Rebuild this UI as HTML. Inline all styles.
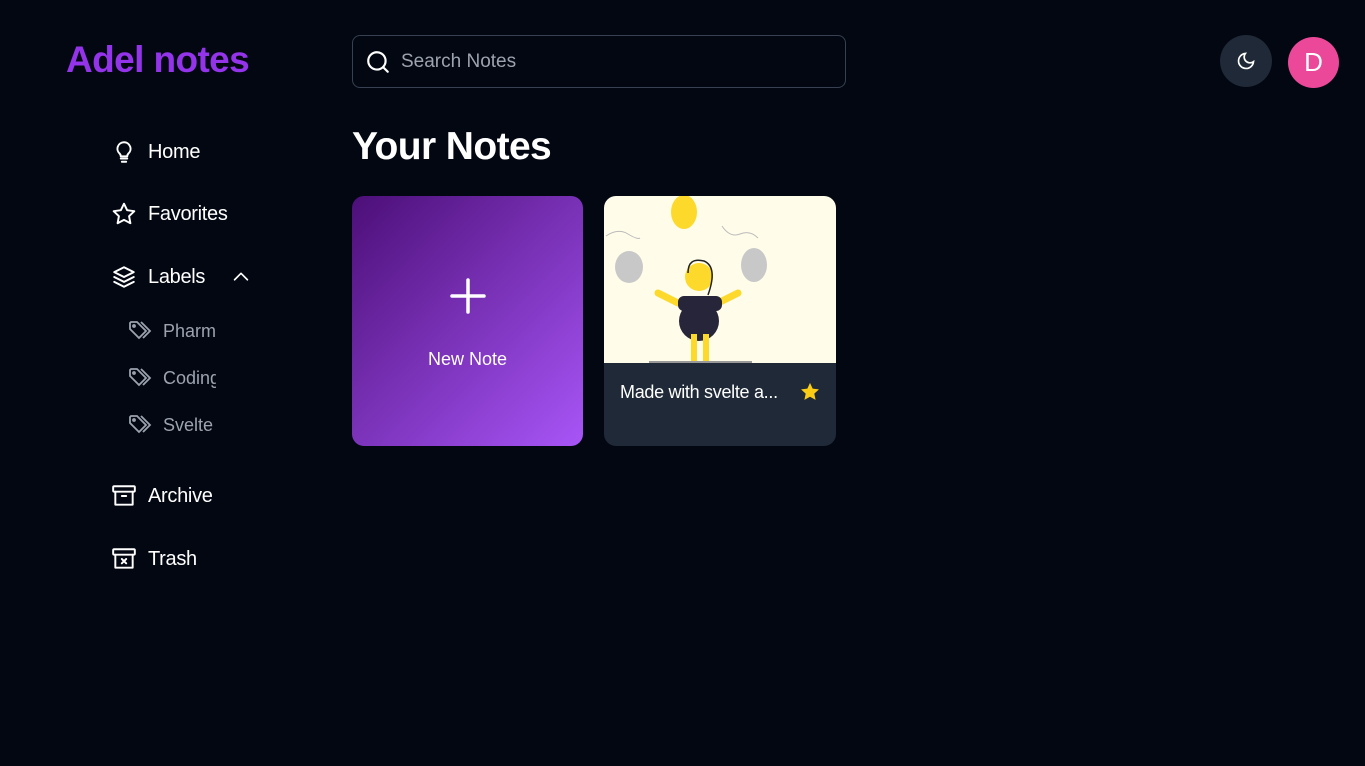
<!DOCTYPE html>
<html><head><style>
*{margin:0;padding:0;box-sizing:border-box}
body{width:1365px;height:766px;background:#030712;font-family:"Liberation Sans",sans-serif;color:#fff;position:relative;overflow:hidden}
.abs{position:absolute}
.logo{left:66px;top:39px;font-size:37px;font-weight:bold;color:#9333ea;letter-spacing:-0.6px}
.nav{left:111px;font-size:20px;display:flex;align-items:center;gap:11px;letter-spacing:-0.3px}
.nav svg{width:26px;height:26px;fill:none;stroke:#fff;stroke-width:1.8;stroke-linecap:round;stroke-linejoin:round}
.lab{left:128px;font-size:18px;color:#9ca3af;display:flex;align-items:center;gap:9px;width:88px;overflow:hidden;white-space:nowrap}
.lab svg{width:26px;height:22px;fill:none;stroke:#9ca3af;stroke-width:1.8;flex:none}
.search{left:352px;top:35px;width:494px;height:53px;border:1px solid #374151;border-radius:8px;display:flex;align-items:center;padding-left:12px;gap:10px;font-size:19px;color:#9ca3af}
</style></head><body>
<div class="abs logo">Adel notes</div>
<div class="abs nav" style="top:139px"><svg viewBox="0 0 24 24"><path d="M9 18h6M10 21h4M12 3a6 6 0 0 0-4 10.5c.7.7 1 1.5 1 2.5h6c0-1 .3-1.8 1-2.5A6 6 0 0 0 12 3z"/></svg>Home</div>
<div class="abs nav" style="top:201px"><svg viewBox="0 0 24 24"><path d="M12 2.5l2.9 6 6.6.9-4.8 4.6 1.2 6.5L12 17.4l-5.9 3.1 1.2-6.5L2.5 9.4l6.6-.9z"/></svg>Favorites</div>
<div class="abs nav" style="top:264px"><svg viewBox="0 0 24 24"><path d="M12 3l9 4.5-9 4.5-9-4.5zM3 12l9 4.5 9-4.5M3 16.5l9 4.5 9-4.5"/></svg>Labels<svg viewBox="0 0 24 24" style="margin-left:14px;width:22px"><path d="M5 15l7-7 7 7"/></svg></div>
<div class="abs lab" style="top:320px"><svg viewBox="0 0 26 22"><path d="M2 3v6l9 9 7-7-9-9H3zM13 2l9 9-7 7"/><circle cx="6" cy="6" r="1"/></svg>Pharmacy</div>
<div class="abs lab" style="top:367px"><svg viewBox="0 0 26 22"><path d="M2 3v6l9 9 7-7-9-9H3zM13 2l9 9-7 7"/><circle cx="6" cy="6" r="1"/></svg>Coding</div>
<div class="abs lab" style="top:414px"><svg viewBox="0 0 26 22"><path d="M2 3v6l9 9 7-7-9-9H3zM13 2l9 9-7 7"/><circle cx="6" cy="6" r="1"/></svg>Svelte</div>
<div class="abs nav" style="top:483px"><svg viewBox="0 0 24 24"><rect x="2" y="3" width="20" height="5" rx="1"/><path d="M4 8v12h16V8M10 12h4"/></svg>Archive</div>
<div class="abs nav" style="top:546px"><svg viewBox="0 0 24 24"><rect x="2" y="3" width="20" height="5" rx="1"/><path d="M4 8v12h16V8M10 12l4 4M14 12l-4 4"/></svg>Trash</div>
<div class="abs search"><svg width="26" height="26" viewBox="0 0 24 24" fill="none" stroke="#fff" stroke-width="2" stroke-linecap="round"><circle cx="11" cy="11" r="8"/><path d="M21 21l-4.3-4.3"/></svg>Search Notes</div>
<div class="abs" style="left:1220px;top:35px;width:52px;height:52px;border-radius:50%;background:#1f2937;display:flex;align-items:center;justify-content:center"><svg width="20" height="20" viewBox="0 0 24 24" fill="none" stroke="#fff" stroke-width="2"><path d="M21 12.8A9 9 0 1 1 11.2 3a7 7 0 0 0 9.8 9.8z"/></svg></div>
<div class="abs" style="left:1288px;top:37px;width:51px;height:51px;border-radius:50%;background:#ec4899;display:flex;align-items:center;justify-content:center;font-size:26px">D</div>
<div class="abs" style="left:352px;top:125px;font-size:39px;font-weight:bold;letter-spacing:-0.6px">Your Notes</div>
<div class="abs" style="left:352px;top:196px;width:231px;height:250px;border-radius:12px;background:linear-gradient(135deg,#4c0f78,#a855f7)">
<svg class="abs" style="left:97px;top:81px" width="38" height="38" viewBox="0 0 38 38" stroke="#fff" stroke-width="3.5" stroke-linecap="round"><path d="M19 3v32M3 19h32"/></svg>
<div class="abs" style="left:0;right:0;top:153px;text-align:center;font-size:18px">New Note</div></div>
<div class="abs" style="left:604px;top:196px;width:232px;height:250px;border-radius:12px;overflow:hidden;background:#1f2937">
<svg width="232" height="167" viewBox="0 0 232 167" style="display:block;background:#fffce9">
<ellipse cx="80" cy="16" rx="13" ry="17" fill="#fcd92b"/>
<ellipse cx="25" cy="71" rx="14" ry="16" fill="#c8c8c8"/>
<ellipse cx="150" cy="69" rx="13" ry="17" fill="#c8c8c8"/>
<path d="M2 40q12-8 22-2t12 4M118 30q8 12 18 8t18 4" stroke="#bbb" fill="none"/>
<path d="M54 97l20 10M134 97l-20 10" stroke="#fcd92b" stroke-width="7" stroke-linecap="round"/>
<ellipse cx="95" cy="125" rx="20" ry="20" fill="#26253a"/>
<rect x="74" y="100" width="44" height="15" rx="6" fill="#26253a"/>
<rect x="87" y="138" width="6" height="29" fill="#fcd92b"/><rect x="99" y="138" width="6" height="29" fill="#fcd92b"/>
<circle cx="95" cy="81" r="14" fill="#fcd92b"/>
<path d="M84 77q0-16 16-12q14 6 4 34" stroke="#222" fill="none" stroke-width="1.5"/>
<rect x="45" y="165" width="103" height="2" fill="#999"/>
</svg>
<div class="abs" style="left:16px;top:186px;font-size:18px;letter-spacing:-0.3px">Made with svelte a...</div>
<svg class="abs" style="left:195px;top:185px" width="22" height="22" viewBox="0 0 24 24" fill="#facc15"><path d="M12 2l2.9 6.3 6.9.8-5.1 4.7 1.4 6.8L12 17.2l-6.1 3.4 1.4-6.8L2.2 9.1l6.9-.8z"/></svg>
</div>
</body></html>
